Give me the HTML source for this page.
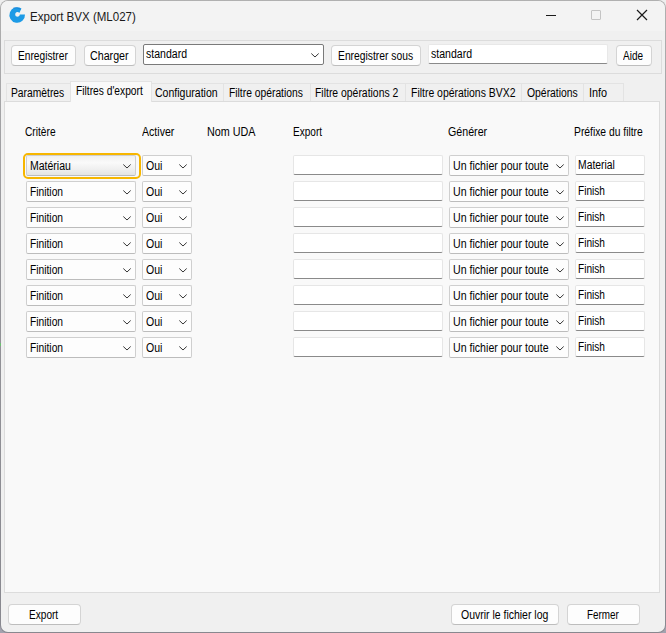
<!DOCTYPE html>
<html><head><meta charset="utf-8"><style>
html,body{margin:0;padding:0;}
body{width:666px;height:633px;position:relative;overflow:hidden;background:linear-gradient(#eeeeee,#e0e0e0 50%,#a2a2ae);font-family:"Liberation Sans",sans-serif;}
.b{position:absolute;}
.t{position:absolute;white-space:pre;transform-origin:0 0;line-height:20px;font-size:12px;}
#win{position:absolute;left:0;top:0;width:666px;height:633px;border-radius:8px;background:linear-gradient(#b0b0b0,#95959a 40%,#88888f);}
#inner{position:absolute;left:1px;top:1px;width:664px;height:631px;border-radius:7px;background:#f0f0f0;}
#title{position:absolute;left:1px;top:1px;width:664px;height:30px;background:#f3f3f3;border-radius:7px 7px 0 0;}
</style></head><body>
<div id="win"></div><div id="inner"></div>
<div id="title"></div>
<svg class="b" style="left:0;top:0" width="30" height="30" viewBox="0 0 30 30">
<path d="M24.99 14.59 A7.8 7.8 0 1 1 21.45 8.46 L19.31 12.98 A2.3 2.3 0 1 0 19.8 14.4 Z" fill="#1d9be6"/>
<path d="M13 8.2 Q17 6.8 20.5 9.2" fill="none" stroke="#1678cf" stroke-width="1" opacity="0.6"/>
</svg>
<span class="t" style="left:29.54px;top:7px;transform:scaleX(0.9620);color:#1a1a1a;">Export BVX (ML027)</span>
<div class="b" style="left:546px;top:15px;width:10px;height:1px;background:#1a1a1a"></div>
<div class="b" style="left:591px;top:10px;width:8px;height:8px;border:1px solid #c4c4c4;border-radius:1px"></div>
<svg class="b" style="left:636px;top:9px" width="12" height="12" viewBox="0 0 12 12">
<path d="M1 1 L11 11 M11 1 L1 11" stroke="#1a1a1a" stroke-width="1.2"/></svg>
<div class="b" style="left:0px;top:343px;width:1px;height:3px;background:#6cc070"></div>
<div class="b" style="left:4px;top:40px;width:656px;height:32px;border:1px solid #dcdcdc"></div>
<div class="b" style="left:11px;top:45px;width:65px;height:21px;background:#fdfdfd;border:1px solid #d4d4d4;border-bottom-color:#bdbdbd;border-radius:4px;box-sizing:border-box"></div>
<span class="t" style="left:17.65px;top:46px;transform:scaleX(0.8483);color:#000;">Enregistrer</span>
<div class="b" style="left:84px;top:45px;width:52px;height:21px;background:#fdfdfd;border:1px solid #d4d4d4;border-bottom-color:#bdbdbd;border-radius:4px;box-sizing:border-box"></div>
<span class="t" style="left:89.51px;top:46px;transform:scaleX(0.8905);color:#000;">Charger</span>
<div class="b" style="left:143px;top:44px;width:181px;height:21px;background:#fff;border:1px solid #7a7a7a;border-radius:2px;box-sizing:border-box"></div>
<span class="t" style="left:145.80px;top:44px;transform:scaleX(0.8783);color:#000;">standard</span>
<svg class="b" style="left:311px;top:53px" width="8" height="5" viewBox="0 0 8 5"><path d="M0.3 0.5 L4 4 L7.7 0.5" fill="none" stroke="#363636" stroke-width="1"/></svg>
<div class="b" style="left:331px;top:45px;width:90px;height:21px;background:#fdfdfd;border:1px solid #d4d4d4;border-bottom-color:#bdbdbd;border-radius:4px;box-sizing:border-box"></div>
<span class="t" style="left:337.54px;top:46px;transform:scaleX(0.8593);color:#000;">Enregistrer sous</span>
<div class="b" style="left:428px;top:44px;width:180px;height:20px;background:#fff;border:1px solid #e8e8e8;border-bottom:1px solid #8a8a8a;border-radius:2px;box-sizing:border-box"></div>
<span class="t" style="left:430.80px;top:44px;transform:scaleX(0.8783);color:#000;">standard</span>
<div class="b" style="left:616px;top:45px;width:36px;height:21px;background:#fdfdfd;border:1px solid #d4d4d4;border-bottom-color:#bdbdbd;border-radius:4px;box-sizing:border-box"></div>
<span class="t" style="left:623.00px;top:46px;transform:scaleX(0.8333);color:#000;">Aide</span>
<div class="b" style="left:4px;top:101px;width:656px;height:492px;background:#f9f9f9;border:1px solid #dcdcdc;box-sizing:border-box"></div>
<div class="b" style="left:6px;top:83px;width:65px;height:18px;background:#f0f0f0;border:1px solid #e3e3e3;border-bottom:none;box-sizing:border-box"></div>
<span class="t" style="left:11.14px;top:83px;transform:scaleX(0.8574);color:#000;">Paramètres</span>
<div class="b" style="left:151px;top:83px;width:73px;height:18px;background:#f0f0f0;border:1px solid #e3e3e3;border-bottom:none;box-sizing:border-box"></div>
<span class="t" style="left:154.92px;top:83px;transform:scaleX(0.8771);color:#000;">Configuration</span>
<div class="b" style="left:223px;top:83px;width:88px;height:18px;background:#f0f0f0;border:1px solid #e3e3e3;border-bottom:none;box-sizing:border-box"></div>
<span class="t" style="left:229.14px;top:83px;transform:scaleX(0.8588);color:#000;">Filtre opérations</span>
<div class="b" style="left:310px;top:83px;width:96px;height:18px;background:#f0f0f0;border:1px solid #e3e3e3;border-bottom:none;box-sizing:border-box"></div>
<span class="t" style="left:315.33px;top:83px;transform:scaleX(0.8674);color:#000;">Filtre opérations 2</span>
<div class="b" style="left:405px;top:83px;width:117px;height:18px;background:#f0f0f0;border:1px solid #e3e3e3;border-bottom:none;box-sizing:border-box"></div>
<span class="t" style="left:410.53px;top:83px;transform:scaleX(0.8706);color:#000;">Filtre opérations BVX2</span>
<div class="b" style="left:521px;top:83px;width:63px;height:18px;background:#f0f0f0;border:1px solid #e3e3e3;border-bottom:none;box-sizing:border-box"></div>
<span class="t" style="left:527.00px;top:83px;transform:scaleX(0.8655);color:#000;">Opérations</span>
<div class="b" style="left:583px;top:83px;width:41px;height:18px;background:#f0f0f0;border:1px solid #e3e3e3;border-bottom:none;box-sizing:border-box"></div>
<span class="t" style="left:588.89px;top:83px;transform:scaleX(0.9053);color:#000;">Info</span>
<div class="b" style="left:70px;top:81px;width:82px;height:21px;background:#f9f9f9;border:1px solid #e3e3e3;border-bottom:none;box-sizing:border-box"></div>
<span class="t" style="left:76.45px;top:81px;transform:scaleX(0.8532);color:#000;">Filtres d'export</span>
<span class="t" style="left:24.75px;top:122px;transform:scaleX(0.8486);color:#000;">Critère</span>
<span class="t" style="left:142.20px;top:122px;transform:scaleX(0.8811);color:#000;">Activer</span>
<span class="t" style="left:206.50px;top:122px;transform:scaleX(0.8981);color:#000;">Nom UDA</span>
<span class="t" style="left:292.66px;top:122px;transform:scaleX(0.8382);color:#000;">Export</span>
<span class="t" style="left:447.71px;top:122px;transform:scaleX(0.8884);color:#000;">Générer</span>
<span class="t" style="left:574.34px;top:122px;transform:scaleX(0.8595);color:#000;">Préfixe du filtre</span>
<div class="b" style="left:23px;top:153px;width:118px;height:26px;border:2px solid #f7b600;border-radius:5px;box-sizing:border-box"></div>
<div class="b" style="left:26px;top:155px;width:110px;height:21px;background:linear-gradient(#f0f0f0,#fafafa 35%,#efefef 70%,#e4e4e4);border:1px solid #cfcfcf;border-bottom-color:#bcbcbc;border-radius:2px;box-sizing:border-box"></div>
<span class="t" style="left:29.72px;top:156px;transform:scaleX(0.8756);color:#000;">Matériau</span>
<svg class="b" style="left:123px;top:164px" width="8" height="5" viewBox="0 0 8 5"><path d="M0.3 0.5 L4 4 L7.7 0.5" fill="none" stroke="#363636" stroke-width="1"/></svg>
<div class="b" style="left:142px;top:155px;width:50px;height:21px;background:#fdfdfd;border:1px solid #cfcfcf;border-bottom-color:#bcbcbc;border-radius:2px;box-sizing:border-box"></div>
<span class="t" style="left:145.80px;top:156px;transform:scaleX(0.8778);color:#000;">Oui</span>
<svg class="b" style="left:179px;top:164px" width="8" height="5" viewBox="0 0 8 5"><path d="M0.3 0.5 L4 4 L7.7 0.5" fill="none" stroke="#363636" stroke-width="1"/></svg>
<div class="b" style="left:293px;top:155px;width:150px;height:20px;background:#fff;border:1px solid #e6e6e6;border-bottom:1px solid #8a8a8a;border-radius:2px;box-sizing:border-box"></div>
<div class="b" style="left:449px;top:155px;width:120px;height:21px;background:#fdfdfd;border:1px solid #cfcfcf;border-bottom-color:#bcbcbc;border-radius:2px;box-sizing:border-box"></div>
<span class="t" style="left:452.72px;top:156px;transform:scaleX(0.8841);color:#000;">Un fichier pour toute</span>
<svg class="b" style="left:556px;top:164px" width="8" height="5" viewBox="0 0 8 5"><path d="M0.3 0.5 L4 4 L7.7 0.5" fill="none" stroke="#363636" stroke-width="1"/></svg>
<div class="b" style="left:575px;top:155px;width:70px;height:20px;background:#fff;border:1px solid #e6e6e6;border-bottom:1px solid #8a8a8a;border-radius:2px;box-sizing:border-box"></div>
<span class="t" style="left:577.74px;top:155px;transform:scaleX(0.8634);color:#000;">Material</span>
<div class="b" style="left:26px;top:181px;width:110px;height:21px;background:#fdfdfd;border:1px solid #cfcfcf;border-bottom-color:#bcbcbc;border-radius:2px;box-sizing:border-box"></div>
<span class="t" style="left:29.55px;top:182px;transform:scaleX(0.8541);color:#000;">Finition</span>
<svg class="b" style="left:123px;top:190px" width="8" height="5" viewBox="0 0 8 5"><path d="M0.3 0.5 L4 4 L7.7 0.5" fill="none" stroke="#363636" stroke-width="1"/></svg>
<div class="b" style="left:142px;top:181px;width:50px;height:21px;background:#fdfdfd;border:1px solid #cfcfcf;border-bottom-color:#bcbcbc;border-radius:2px;box-sizing:border-box"></div>
<span class="t" style="left:145.80px;top:182px;transform:scaleX(0.8778);color:#000;">Oui</span>
<svg class="b" style="left:179px;top:190px" width="8" height="5" viewBox="0 0 8 5"><path d="M0.3 0.5 L4 4 L7.7 0.5" fill="none" stroke="#363636" stroke-width="1"/></svg>
<div class="b" style="left:293px;top:181px;width:150px;height:20px;background:#fff;border:1px solid #e6e6e6;border-bottom:1px solid #8a8a8a;border-radius:2px;box-sizing:border-box"></div>
<div class="b" style="left:449px;top:181px;width:120px;height:21px;background:#fdfdfd;border:1px solid #cfcfcf;border-bottom-color:#bcbcbc;border-radius:2px;box-sizing:border-box"></div>
<span class="t" style="left:452.72px;top:182px;transform:scaleX(0.8841);color:#000;">Un fichier pour toute</span>
<svg class="b" style="left:556px;top:190px" width="8" height="5" viewBox="0 0 8 5"><path d="M0.3 0.5 L4 4 L7.7 0.5" fill="none" stroke="#363636" stroke-width="1"/></svg>
<div class="b" style="left:575px;top:181px;width:70px;height:20px;background:#fff;border:1px solid #e6e6e6;border-bottom:1px solid #8a8a8a;border-radius:2px;box-sizing:border-box"></div>
<span class="t" style="left:577.76px;top:181px;transform:scaleX(0.8433);color:#000;">Finish</span>
<div class="b" style="left:26px;top:207px;width:110px;height:21px;background:#fdfdfd;border:1px solid #cfcfcf;border-bottom-color:#bcbcbc;border-radius:2px;box-sizing:border-box"></div>
<span class="t" style="left:29.55px;top:208px;transform:scaleX(0.8541);color:#000;">Finition</span>
<svg class="b" style="left:123px;top:216px" width="8" height="5" viewBox="0 0 8 5"><path d="M0.3 0.5 L4 4 L7.7 0.5" fill="none" stroke="#363636" stroke-width="1"/></svg>
<div class="b" style="left:142px;top:207px;width:50px;height:21px;background:#fdfdfd;border:1px solid #cfcfcf;border-bottom-color:#bcbcbc;border-radius:2px;box-sizing:border-box"></div>
<span class="t" style="left:145.80px;top:208px;transform:scaleX(0.8778);color:#000;">Oui</span>
<svg class="b" style="left:179px;top:216px" width="8" height="5" viewBox="0 0 8 5"><path d="M0.3 0.5 L4 4 L7.7 0.5" fill="none" stroke="#363636" stroke-width="1"/></svg>
<div class="b" style="left:293px;top:207px;width:150px;height:20px;background:#fff;border:1px solid #e6e6e6;border-bottom:1px solid #8a8a8a;border-radius:2px;box-sizing:border-box"></div>
<div class="b" style="left:449px;top:207px;width:120px;height:21px;background:#fdfdfd;border:1px solid #cfcfcf;border-bottom-color:#bcbcbc;border-radius:2px;box-sizing:border-box"></div>
<span class="t" style="left:452.72px;top:208px;transform:scaleX(0.8841);color:#000;">Un fichier pour toute</span>
<svg class="b" style="left:556px;top:216px" width="8" height="5" viewBox="0 0 8 5"><path d="M0.3 0.5 L4 4 L7.7 0.5" fill="none" stroke="#363636" stroke-width="1"/></svg>
<div class="b" style="left:575px;top:207px;width:70px;height:20px;background:#fff;border:1px solid #e6e6e6;border-bottom:1px solid #8a8a8a;border-radius:2px;box-sizing:border-box"></div>
<span class="t" style="left:577.76px;top:207px;transform:scaleX(0.8433);color:#000;">Finish</span>
<div class="b" style="left:26px;top:233px;width:110px;height:21px;background:#fdfdfd;border:1px solid #cfcfcf;border-bottom-color:#bcbcbc;border-radius:2px;box-sizing:border-box"></div>
<span class="t" style="left:29.55px;top:234px;transform:scaleX(0.8541);color:#000;">Finition</span>
<svg class="b" style="left:123px;top:242px" width="8" height="5" viewBox="0 0 8 5"><path d="M0.3 0.5 L4 4 L7.7 0.5" fill="none" stroke="#363636" stroke-width="1"/></svg>
<div class="b" style="left:142px;top:233px;width:50px;height:21px;background:#fdfdfd;border:1px solid #cfcfcf;border-bottom-color:#bcbcbc;border-radius:2px;box-sizing:border-box"></div>
<span class="t" style="left:145.80px;top:234px;transform:scaleX(0.8778);color:#000;">Oui</span>
<svg class="b" style="left:179px;top:242px" width="8" height="5" viewBox="0 0 8 5"><path d="M0.3 0.5 L4 4 L7.7 0.5" fill="none" stroke="#363636" stroke-width="1"/></svg>
<div class="b" style="left:293px;top:233px;width:150px;height:20px;background:#fff;border:1px solid #e6e6e6;border-bottom:1px solid #8a8a8a;border-radius:2px;box-sizing:border-box"></div>
<div class="b" style="left:449px;top:233px;width:120px;height:21px;background:#fdfdfd;border:1px solid #cfcfcf;border-bottom-color:#bcbcbc;border-radius:2px;box-sizing:border-box"></div>
<span class="t" style="left:452.72px;top:234px;transform:scaleX(0.8841);color:#000;">Un fichier pour toute</span>
<svg class="b" style="left:556px;top:242px" width="8" height="5" viewBox="0 0 8 5"><path d="M0.3 0.5 L4 4 L7.7 0.5" fill="none" stroke="#363636" stroke-width="1"/></svg>
<div class="b" style="left:575px;top:233px;width:70px;height:20px;background:#fff;border:1px solid #e6e6e6;border-bottom:1px solid #8a8a8a;border-radius:2px;box-sizing:border-box"></div>
<span class="t" style="left:577.76px;top:233px;transform:scaleX(0.8433);color:#000;">Finish</span>
<div class="b" style="left:26px;top:259px;width:110px;height:21px;background:#fdfdfd;border:1px solid #cfcfcf;border-bottom-color:#bcbcbc;border-radius:2px;box-sizing:border-box"></div>
<span class="t" style="left:29.55px;top:260px;transform:scaleX(0.8541);color:#000;">Finition</span>
<svg class="b" style="left:123px;top:268px" width="8" height="5" viewBox="0 0 8 5"><path d="M0.3 0.5 L4 4 L7.7 0.5" fill="none" stroke="#363636" stroke-width="1"/></svg>
<div class="b" style="left:142px;top:259px;width:50px;height:21px;background:#fdfdfd;border:1px solid #cfcfcf;border-bottom-color:#bcbcbc;border-radius:2px;box-sizing:border-box"></div>
<span class="t" style="left:145.80px;top:260px;transform:scaleX(0.8778);color:#000;">Oui</span>
<svg class="b" style="left:179px;top:268px" width="8" height="5" viewBox="0 0 8 5"><path d="M0.3 0.5 L4 4 L7.7 0.5" fill="none" stroke="#363636" stroke-width="1"/></svg>
<div class="b" style="left:293px;top:259px;width:150px;height:20px;background:#fff;border:1px solid #e6e6e6;border-bottom:1px solid #8a8a8a;border-radius:2px;box-sizing:border-box"></div>
<div class="b" style="left:449px;top:259px;width:120px;height:21px;background:#fdfdfd;border:1px solid #cfcfcf;border-bottom-color:#bcbcbc;border-radius:2px;box-sizing:border-box"></div>
<span class="t" style="left:452.72px;top:260px;transform:scaleX(0.8841);color:#000;">Un fichier pour toute</span>
<svg class="b" style="left:556px;top:268px" width="8" height="5" viewBox="0 0 8 5"><path d="M0.3 0.5 L4 4 L7.7 0.5" fill="none" stroke="#363636" stroke-width="1"/></svg>
<div class="b" style="left:575px;top:259px;width:70px;height:20px;background:#fff;border:1px solid #e6e6e6;border-bottom:1px solid #8a8a8a;border-radius:2px;box-sizing:border-box"></div>
<span class="t" style="left:577.76px;top:259px;transform:scaleX(0.8433);color:#000;">Finish</span>
<div class="b" style="left:26px;top:285px;width:110px;height:21px;background:#fdfdfd;border:1px solid #cfcfcf;border-bottom-color:#bcbcbc;border-radius:2px;box-sizing:border-box"></div>
<span class="t" style="left:29.55px;top:286px;transform:scaleX(0.8541);color:#000;">Finition</span>
<svg class="b" style="left:123px;top:294px" width="8" height="5" viewBox="0 0 8 5"><path d="M0.3 0.5 L4 4 L7.7 0.5" fill="none" stroke="#363636" stroke-width="1"/></svg>
<div class="b" style="left:142px;top:285px;width:50px;height:21px;background:#fdfdfd;border:1px solid #cfcfcf;border-bottom-color:#bcbcbc;border-radius:2px;box-sizing:border-box"></div>
<span class="t" style="left:145.80px;top:286px;transform:scaleX(0.8778);color:#000;">Oui</span>
<svg class="b" style="left:179px;top:294px" width="8" height="5" viewBox="0 0 8 5"><path d="M0.3 0.5 L4 4 L7.7 0.5" fill="none" stroke="#363636" stroke-width="1"/></svg>
<div class="b" style="left:293px;top:285px;width:150px;height:20px;background:#fff;border:1px solid #e6e6e6;border-bottom:1px solid #8a8a8a;border-radius:2px;box-sizing:border-box"></div>
<div class="b" style="left:449px;top:285px;width:120px;height:21px;background:#fdfdfd;border:1px solid #cfcfcf;border-bottom-color:#bcbcbc;border-radius:2px;box-sizing:border-box"></div>
<span class="t" style="left:452.72px;top:286px;transform:scaleX(0.8841);color:#000;">Un fichier pour toute</span>
<svg class="b" style="left:556px;top:294px" width="8" height="5" viewBox="0 0 8 5"><path d="M0.3 0.5 L4 4 L7.7 0.5" fill="none" stroke="#363636" stroke-width="1"/></svg>
<div class="b" style="left:575px;top:285px;width:70px;height:20px;background:#fff;border:1px solid #e6e6e6;border-bottom:1px solid #8a8a8a;border-radius:2px;box-sizing:border-box"></div>
<span class="t" style="left:577.76px;top:285px;transform:scaleX(0.8433);color:#000;">Finish</span>
<div class="b" style="left:26px;top:311px;width:110px;height:21px;background:#fdfdfd;border:1px solid #cfcfcf;border-bottom-color:#bcbcbc;border-radius:2px;box-sizing:border-box"></div>
<span class="t" style="left:29.55px;top:312px;transform:scaleX(0.8541);color:#000;">Finition</span>
<svg class="b" style="left:123px;top:320px" width="8" height="5" viewBox="0 0 8 5"><path d="M0.3 0.5 L4 4 L7.7 0.5" fill="none" stroke="#363636" stroke-width="1"/></svg>
<div class="b" style="left:142px;top:311px;width:50px;height:21px;background:#fdfdfd;border:1px solid #cfcfcf;border-bottom-color:#bcbcbc;border-radius:2px;box-sizing:border-box"></div>
<span class="t" style="left:145.80px;top:312px;transform:scaleX(0.8778);color:#000;">Oui</span>
<svg class="b" style="left:179px;top:320px" width="8" height="5" viewBox="0 0 8 5"><path d="M0.3 0.5 L4 4 L7.7 0.5" fill="none" stroke="#363636" stroke-width="1"/></svg>
<div class="b" style="left:293px;top:311px;width:150px;height:20px;background:#fff;border:1px solid #e6e6e6;border-bottom:1px solid #8a8a8a;border-radius:2px;box-sizing:border-box"></div>
<div class="b" style="left:449px;top:311px;width:120px;height:21px;background:#fdfdfd;border:1px solid #cfcfcf;border-bottom-color:#bcbcbc;border-radius:2px;box-sizing:border-box"></div>
<span class="t" style="left:452.72px;top:312px;transform:scaleX(0.8841);color:#000;">Un fichier pour toute</span>
<svg class="b" style="left:556px;top:320px" width="8" height="5" viewBox="0 0 8 5"><path d="M0.3 0.5 L4 4 L7.7 0.5" fill="none" stroke="#363636" stroke-width="1"/></svg>
<div class="b" style="left:575px;top:311px;width:70px;height:20px;background:#fff;border:1px solid #e6e6e6;border-bottom:1px solid #8a8a8a;border-radius:2px;box-sizing:border-box"></div>
<span class="t" style="left:577.76px;top:311px;transform:scaleX(0.8433);color:#000;">Finish</span>
<div class="b" style="left:26px;top:337px;width:110px;height:21px;background:#fdfdfd;border:1px solid #cfcfcf;border-bottom-color:#bcbcbc;border-radius:2px;box-sizing:border-box"></div>
<span class="t" style="left:29.55px;top:338px;transform:scaleX(0.8541);color:#000;">Finition</span>
<svg class="b" style="left:123px;top:346px" width="8" height="5" viewBox="0 0 8 5"><path d="M0.3 0.5 L4 4 L7.7 0.5" fill="none" stroke="#363636" stroke-width="1"/></svg>
<div class="b" style="left:142px;top:337px;width:50px;height:21px;background:#fdfdfd;border:1px solid #cfcfcf;border-bottom-color:#bcbcbc;border-radius:2px;box-sizing:border-box"></div>
<span class="t" style="left:145.80px;top:338px;transform:scaleX(0.8778);color:#000;">Oui</span>
<svg class="b" style="left:179px;top:346px" width="8" height="5" viewBox="0 0 8 5"><path d="M0.3 0.5 L4 4 L7.7 0.5" fill="none" stroke="#363636" stroke-width="1"/></svg>
<div class="b" style="left:293px;top:337px;width:150px;height:20px;background:#fff;border:1px solid #e6e6e6;border-bottom:1px solid #8a8a8a;border-radius:2px;box-sizing:border-box"></div>
<div class="b" style="left:449px;top:337px;width:120px;height:21px;background:#fdfdfd;border:1px solid #cfcfcf;border-bottom-color:#bcbcbc;border-radius:2px;box-sizing:border-box"></div>
<span class="t" style="left:452.72px;top:338px;transform:scaleX(0.8841);color:#000;">Un fichier pour toute</span>
<svg class="b" style="left:556px;top:346px" width="8" height="5" viewBox="0 0 8 5"><path d="M0.3 0.5 L4 4 L7.7 0.5" fill="none" stroke="#363636" stroke-width="1"/></svg>
<div class="b" style="left:575px;top:337px;width:70px;height:20px;background:#fff;border:1px solid #e6e6e6;border-bottom:1px solid #8a8a8a;border-radius:2px;box-sizing:border-box"></div>
<span class="t" style="left:577.76px;top:337px;transform:scaleX(0.8433);color:#000;">Finish</span>
<div class="b" style="left:8px;top:604px;width:73px;height:21px;background:#fdfdfd;border:1px solid #d4d4d4;border-bottom-color:#bdbdbd;border-radius:4px;box-sizing:border-box"></div>
<span class="t" style="left:28.66px;top:605px;transform:scaleX(0.8412);color:#000;">Export</span>
<div class="b" style="left:451px;top:604px;width:108px;height:21px;background:#fdfdfd;border:1px solid #d4d4d4;border-bottom-color:#bdbdbd;border-radius:4px;box-sizing:border-box"></div>
<span class="t" style="left:460.90px;top:605px;transform:scaleX(0.8727);color:#000;">Ouvrir le fichier log</span>
<div class="b" style="left:567px;top:604px;width:73px;height:21px;background:#fdfdfd;border:1px solid #d4d4d4;border-bottom-color:#bdbdbd;border-radius:4px;box-sizing:border-box"></div>
<span class="t" style="left:586.68px;top:605px;transform:scaleX(0.8237);color:#000;">Fermer</span>
</body></html>
